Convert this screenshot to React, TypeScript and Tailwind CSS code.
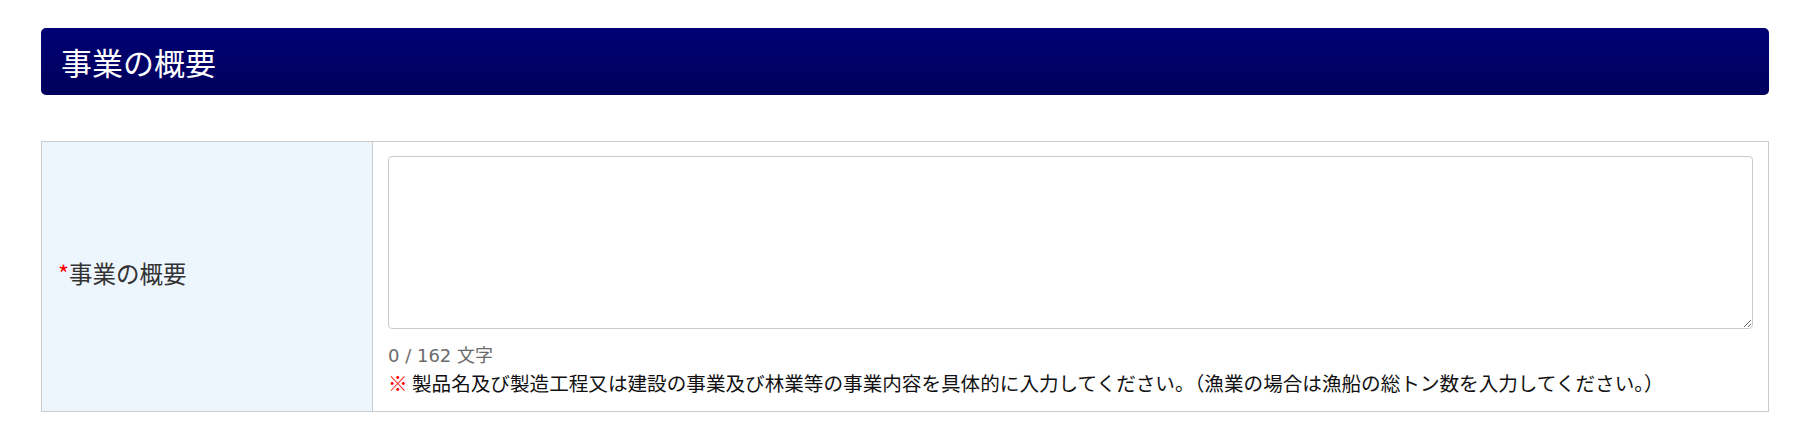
const jp = "font-['Noto_Sans_CJK_JP','Noto_Sans',sans-serif]";

function SectionHeader({ title }: { title: string }) {
  return (
    <div className="flex h-[67px] items-center rounded-[5px] bg-gradient-to-b from-[#000074] to-[#00005c] pl-[20px]">
      <h2 className="text-[31px] leading-none font-normal text-white">{title}</h2>
    </div>
  );
}

export default function App() {
  const max = 162;
  const value = "";

  return (
    <div className={`${jp} min-h-[436px] bg-white px-[41px] pt-[28px]`}>
      <SectionHeader title="事業の概要" />

      <div className="mt-[46px] flex border border-[#cccccc]">
        {/* label cell */}
        <div className="flex w-[331px] shrink-0 items-center border-r border-[#cccccc] bg-[#edf5fd] pb-[6px] pl-[16px]">
          <span className="text-[23.5px] leading-none text-[#333333]">
            <span className="text-[#ff0000]">*</span>事業の概要
          </span>
        </div>

        {/* input cell */}
        <div className="min-w-0 flex-1 px-[15px] pt-[14px] pb-[15px]">
          <textarea
            className="block h-[173px] w-full resize-y rounded-[4px] border border-[#cccccc] bg-white outline-none"
            defaultValue={value}
          />
          <div className="mt-[14px] font-['DejaVu_Sans','Noto_Sans_CJK_JP',sans-serif] text-[18px] leading-[26px] text-[#6b6b6b]">
            {value.length} / {max} 文字
          </div>
          <div className="text-[19.6px] leading-[27px] text-[#111111]">
            <span className="font-bold text-[#ff0000]">※</span> 製品名及び製造工程又は建設の事業及び林業等の事業内容を具体的に入力してください。（漁業の場合は漁船の総トン数を入力してください。）
          </div>
        </div>
      </div>
    </div>
  );
}
